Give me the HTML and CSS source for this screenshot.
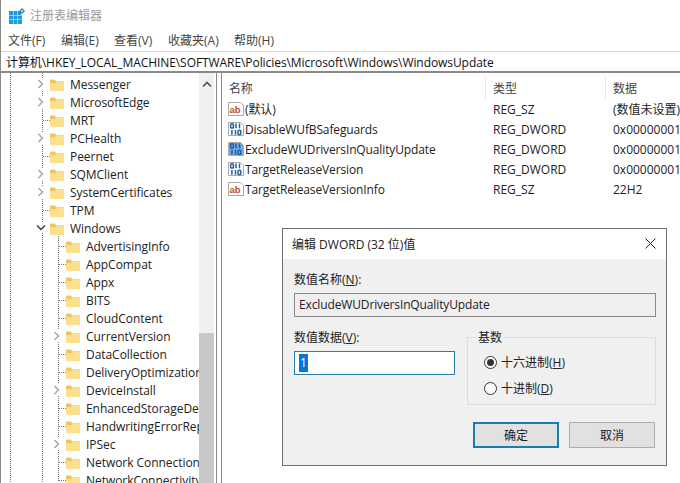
FILE: index.html
```html
<!DOCTYPE html>
<html lang="zh-CN">
<head>
<meta charset="utf-8">
<title>注册表编辑器</title>
<link rel="stylesheet" href="styles.css">
</head>
<body>
<svg class="defs" width="0" height="0" aria-hidden="true">
  <defs>
    <symbol id="folder" viewBox="0 0 14 12">
      <path d="M0 1.500C0 .8.5.5 1 .5h3.600l1.600 1.700H13c.6 0 1 .4 1 1V11c0 .6-.4 1-1 1H1c-.6 0-1-.4-1-1z" fill="#f2c55c"/>
      <path d="M0 4.200l5.200 0 1.400-1.500H14V11c0 .6-.4 1-1 1H1c-.6 0-1-.4-1-1z" fill="#fde08f"/>
    </symbol>
    <symbol id="chev-r" viewBox="0 0 8 10"><path d="M1.500 1l4 4-4 4" fill="none" stroke="#a6a6a6" stroke-width="1.500"/></symbol>
    <symbol id="chev-d" viewBox="0 0 10 8"><path d="M1 1.500l4 4 4-4" fill="none" stroke="#404040" stroke-width="1.500"/></symbol>
    <symbol id="page" viewBox="0 0 16 16">
      <path class="pagefill" d="M.5 1.500h12l3 3v10H.5z" stroke="#a9a9a9"/>
    </symbol>
    <symbol id="bits" viewBox="0 0 16 16">
      <g fill="none" stroke="#27609f" stroke-width="1.500">
        <rect x="2.600" y="2.800" width="2.800" height="4.200" rx="1.100"/><path d="M8 2.500v4.700M11.500 2.500v4.700"/>
        <path d="M3.900 9v4.700M7.500 9v4.700"/><rect x="10" y="9.300" width="2.800" height="4.200" rx="1.100"/>
      </g>
    </symbol>
  </defs>
</svg>
<div class="window">
  <header class="titlebar">
    <svg class="appicon" width="16" height="16" viewBox="0 0 16 16" aria-hidden="true">
      <path d="M0 3h4v4H0zM4.500 3h4v4h-4zM9 3h3v4H9zM0 7.500h4v4H0zM4.500 7.500h4v4h-4zM9 7.500h4v4H9zM0 12h4v4H0zM4.500 12h4v4h-4zM9 12h4v4H9z" fill="#1d9bdc"/>
      <path d="M13 0l3 3-3 3-3-3z" fill="#1f7fb5"/><path d="M13 1.500l1.500 1.500L13 4.500 11.500 3z" fill="#bfe6f7"/>
    </svg>
    <span class="apptitle">注册表编辑器</span>
  </header>
  <nav class="menubar">
    <span class="menu">文件(F)</span><span class="menu">编辑(E)</span><span class="menu m3">查看(V)</span><span class="menu m4">收藏夹(A)</span><span class="menu">帮助(H)</span>
  </nav>
  <div class="address">计算机\HKEY_LOCAL_MACHINE\SOFTWARE\Policies\Microsoft\Windows\WindowsUpdate</div>
  <div class="panes">
    <aside class="treepane">
      <div class="tree">
        <div class="row l1"><svg class="chev" width="8" height="10"><use href="#chev-r"/></svg><svg class="fld" width="14" height="12"><use href="#folder"/></svg><span>Messenger</span></div>
        <div class="row l1"><svg class="chev" width="8" height="10"><use href="#chev-r"/></svg><svg class="fld" width="14" height="12"><use href="#folder"/></svg><span>MicrosoftEdge</span></div>
        <div class="row l1"><i class="tick"></i><svg class="fld" width="14" height="12"><use href="#folder"/></svg><span>MRT</span></div>
        <div class="row l1"><svg class="chev" width="8" height="10"><use href="#chev-r"/></svg><svg class="fld" width="14" height="12"><use href="#folder"/></svg><span>PCHealth</span></div>
        <div class="row l1"><i class="tick"></i><svg class="fld" width="14" height="12"><use href="#folder"/></svg><span>Peernet</span></div>
        <div class="row l1"><svg class="chev" width="8" height="10"><use href="#chev-r"/></svg><svg class="fld" width="14" height="12"><use href="#folder"/></svg><span>SQMClient</span></div>
        <div class="row l1"><svg class="chev" width="8" height="10"><use href="#chev-r"/></svg><svg class="fld" width="14" height="12"><use href="#folder"/></svg><span>SystemCertificates</span></div>
        <div class="row l1"><i class="tick"></i><svg class="fld" width="14" height="12"><use href="#folder"/></svg><span>TPM</span></div>
        <div class="row l1"><svg class="chev chev-open" width="10" height="8"><use href="#chev-d"/></svg><svg class="fld" width="14" height="12"><use href="#folder"/></svg><span>Windows</span></div>
        <div class="row l2"><i class="tick"></i><svg class="fld" width="14" height="12"><use href="#folder"/></svg><span>AdvertisingInfo</span></div>
        <div class="row l2"><i class="tick"></i><svg class="fld" width="14" height="12"><use href="#folder"/></svg><span>AppCompat</span></div>
        <div class="row l2"><i class="tick"></i><svg class="fld" width="14" height="12"><use href="#folder"/></svg><span>Appx</span></div>
        <div class="row l2"><i class="tick"></i><svg class="fld" width="14" height="12"><use href="#folder"/></svg><span>BITS</span></div>
        <div class="row l2"><i class="tick"></i><svg class="fld" width="14" height="12"><use href="#folder"/></svg><span>CloudContent</span></div>
        <div class="row l2"><svg class="chev" width="8" height="10"><use href="#chev-r"/></svg><svg class="fld" width="14" height="12"><use href="#folder"/></svg><span>CurrentVersion</span></div>
        <div class="row l2"><i class="tick"></i><svg class="fld" width="14" height="12"><use href="#folder"/></svg><span>DataCollection</span></div>
        <div class="row l2"><i class="tick"></i><svg class="fld" width="14" height="12"><use href="#folder"/></svg><span>DeliveryOptimization</span></div>
        <div class="row l2"><svg class="chev" width="8" height="10"><use href="#chev-r"/></svg><svg class="fld" width="14" height="12"><use href="#folder"/></svg><span>DeviceInstall</span></div>
        <div class="row l2"><i class="tick"></i><svg class="fld" width="14" height="12"><use href="#folder"/></svg><span>EnhancedStorageDevices</span></div>
        <div class="row l2"><i class="tick"></i><svg class="fld" width="14" height="12"><use href="#folder"/></svg><span>HandwritingErrorReports</span></div>
        <div class="row l2"><svg class="chev" width="8" height="10"><use href="#chev-r"/></svg><svg class="fld" width="14" height="12"><use href="#folder"/></svg><span>IPSec</span></div>
        <div class="row l2"><i class="tick"></i><svg class="fld" width="14" height="12"><use href="#folder"/></svg><span>Network Connections</span></div>
        <div class="row l2"><i class="tick"></i><svg class="fld" width="14" height="12"><use href="#folder"/></svg><span>NetworkConnectivityStatus</span></div>
      </div>
      <div class="scrollbar">
        <svg class="arrow" width="10" height="7" viewBox="0 0 10 7" aria-hidden="true"><path d="M1 5.500l4-4 4 4" fill="none" stroke="#505050" stroke-width="1.700"/></svg>
        <div class="thumb"></div>
      </div>
    </aside>
    <section class="listpane">
      <div class="lrow lhead"><span class="c1">名称</span><span class="c2">类型</span><span class="c3">数据</span></div>
      <div class="lrow"><span class="c1"><svg class="regicon" width="16" height="16" aria-hidden="true"><use href="#page"/><text x="1.500" y="11.500" class="ab">ab</text></svg>(默认)</span><span class="c2">REG_SZ</span><span class="c3">(数值未设置)</span></div>
      <div class="lrow"><span class="c1"><svg class="regicon" width="16" height="16" aria-hidden="true"><use href="#page"/><use href="#bits"/></svg>DisableWUfBSafeguards</span><span class="c2">REG_DWORD</span><span class="c3">0x00000001 (1)</span></div>
      <div class="lrow"><span class="c1"><svg class="regicon selicon" width="16" height="16" aria-hidden="true"><use href="#page"/><use href="#bits"/></svg>ExcludeWUDriversInQualityUpdate</span><span class="c2">REG_DWORD</span><span class="c3">0x00000001 (1)</span></div>
      <div class="lrow"><span class="c1"><svg class="regicon" width="16" height="16" aria-hidden="true"><use href="#page"/><use href="#bits"/></svg>TargetReleaseVersion</span><span class="c2">REG_DWORD</span><span class="c3">0x00000001 (1)</span></div>
      <div class="lrow"><span class="c1"><svg class="regicon" width="16" height="16" aria-hidden="true"><use href="#page"/><text x="1.500" y="11.500" class="ab">ab</text></svg>TargetReleaseVersionInfo</span><span class="c2">REG_SZ</span><span class="c3">22H2</span></div>
    </section>
  </div>
</div>

<div class="dialog">
  <div class="dtitle">
    <span>编辑 DWORD (32 位)值</span>
    <svg width="11" height="11" viewBox="0 0 11 11" aria-hidden="true"><path d="M.5.500l10 10M10.500.500l-10 10" stroke="#222" stroke-width="1" fill="none"/></svg>
  </div>
  <div class="dbody">
    <div class="label">数值名称(<u>N</u>):</div>
    <div class="namefield">ExcludeWUDriversInQualityUpdate</div>
    <div class="columns">
      <div class="datacol">
        <div class="label">数值数据(<u>V</u>):</div>
        <div class="editfield"><span class="sel">1</span></div>
      </div>
      <div class="basegroup">
        <span class="legend">基数</span>
        <div class="radio"><i class="dot on"></i><span>十六进制(<u>H</u>)</span></div>
        <div class="radio"><i class="dot"></i><span>十进制(<u>D</u>)</span></div>
      </div>
    </div>
    <div class="buttons">
      <div class="btn primary">确定</div>
      <div class="btn">取消</div>
    </div>
  </div>
</div>
</body>
</html>
```

FILE: styles.css
```css
* { box-sizing: border-box; }
html, body { margin: 0; height: 100%; }
body {
  width: 680px; height: 483px; overflow: hidden; position: relative; background: #fff;
  font-family: "Open Sans", "Noto Sans CJK SC", sans-serif; font-size: 12px; color: #222;
}
.defs { display: block; height: 0; }
.window { height: 483px; display: flex; flex-direction: column; border-left: 1px solid #8a8a8a; }
.titlebar { height: 30px; display: flex; align-items: center; padding: 0 0 0 8px; gap: 5px; flex: none; }
.appicon { flex: none; margin-top: 1px; }
.apptitle { color: #9a9a9a; }
.menubar { height: 21px; flex: none; display: flex; align-items: center; padding: 0 0 2px 7px; color: #444; }
.menu { width: 53px; flex: none; white-space: nowrap; }
.m3 { width: 54px; }
.m4 { width: 66px; }
.address { height: 22px; flex: none; display: flex; align-items: center; padding-left: 5px; white-space: nowrap; color: #111; letter-spacing: -0.07px;
  border-top: 1px solid #d4d4d4; border-bottom: 2px solid #8a8a8a; }
.panes { flex: 1; display: flex; min-height: 0; }
.treepane { width: 216px; flex: none; display: flex; border-right: 1px solid #8a8a8a; }
.tree {
  width: 198px; flex: none; overflow: hidden; padding-top: 2px; letter-spacing: -0.05px;
  background-image:
    repeating-linear-gradient(#777 0 1px, transparent 1px 2px),
    repeating-linear-gradient(#777 0 1px, transparent 1px 2px),
    repeating-linear-gradient(#777 0 1px, transparent 1px 2px);
  background-size: 1px 100%, 1px 100%, 1px 256px;
  background-position: 9px 0, 41px 0, 57px 153px;
  background-repeat: no-repeat;
}
.row { height: 18px; display: flex; align-items: center; white-space: nowrap; color: #222; }
.l1 { padding-left: 36px; }
.l2 { padding-left: 52px; }
.chev { width: 8px; height: 10px; flex: none; background: #fff; margin-right: 5px; box-shadow: 0 0 0 1px #fff; }
.chev-open { width: 10px; height: 8px; margin-left: -1px; margin-right: 4px; }
.tick { width: 7px; height: 1px; flex: none; margin: 0 0 0 6px; background: repeating-linear-gradient(90deg, #777 0 1px, transparent 1px 2px); }
.fld { flex: none; margin-top: 1px; }
.row span { margin-left: 6px; }
.scrollbar { width: 15px; flex: none; background: #f0f0f0; display: flex; flex-direction: column; align-items: center; padding-top: 8px; }
.thumb { width: 15px; height: 150px; margin-top: auto; background: #c8c8c8; }
.listpane { flex: 1; margin-left: 4px; border-left: 1px solid #8a8a8a; padding-top: 4px; overflow: hidden; min-width: 0; }
.lrow { height: 20px; display: flex; align-items: center; white-space: nowrap; color: #222; }
.lhead { height: 22px; color: #444; }
.c1 { width: 264px; flex: none; padding-left: 7px; display: flex; align-items: center; letter-spacing: -0.13px; }
.c2 { width: 120px; flex: none; padding-left: 7px; }
.c3 { flex: none; padding-left: 7px; }
.lhead .c2, .lhead .c3 { box-shadow: -1px 0 0 #e5e5e5; height: 22px; display: flex; align-items: center; }
.regicon { flex: none; margin: 0 1px 0 -1px; --page: #fff; }
.pagefill { fill: var(--page); }
.ab { font: bold 9.500px "Liberation Sans", sans-serif; fill: #c4502a; }
.selicon { --page: #6ea8e0; }
.dialog { position: absolute; left: 282px; top: 228px; width: 385px; height: 238px; border: 1px solid #6f6f6f; background: #f0f0f0; display: flex; flex-direction: column; }
.dtitle { height: 30px; background: #fff; flex: none; display: flex; align-items: center; justify-content: space-between; padding: 0 10px 1px 9px; color: #222; }
.dbody { flex: 1; padding: 12px 10px 0 11px; }
.label { height: 18px; line-height: 18px; color: #222; }
.namefield { height: 24px; margin-top: 4px; border: 1px solid #8a8a8a; background: #efefef; line-height: 22px; padding-left: 4px; color: #222; letter-spacing: -0.13px; }
.columns { display: flex; margin-top: 12px; gap: 12px; margin-right: -1px; }
.datacol { width: 161px; flex: none; }
.editfield { height: 24px; margin-top: 4px; border: 1px solid #2a7fa8; background: #fff; padding: 2px 0 2px 4px; display: flex; }
.sel { background: #0078d7; color: #fff; width: 9px; line-height: 18px; text-align: center; }
.basegroup { flex: 1; height: 68px; margin: 8px 1px 0 0; border: 1px solid #dcdcdc; position: relative; padding: 11px 0 0 16px; }
.legend { position: absolute; left: 8px; top: -8px; background: #f0f0f0; padding: 0 2px; line-height: 16px; }
.radio { height: 26px; display: flex; align-items: center; gap: 4px; }
.dot { width: 13px; height: 13px; border: 1px solid #333; border-radius: 50%; background: #fff; flex: none; display: flex; align-items: center; justify-content: center; }
.dot.on::after { content: ""; width: 7px; height: 7px; border-radius: 50%; background: #333; }
.buttons { display: flex; justify-content: flex-end; gap: 10px; margin: 17px 1px 0 0; }
.btn { width: 86px; height: 26px; background: #e1e1e1; border: 1px solid #adadad; display: flex; align-items: center; justify-content: center; color: #222; }
.primary { border: 2px solid #1a7cab; }
```
